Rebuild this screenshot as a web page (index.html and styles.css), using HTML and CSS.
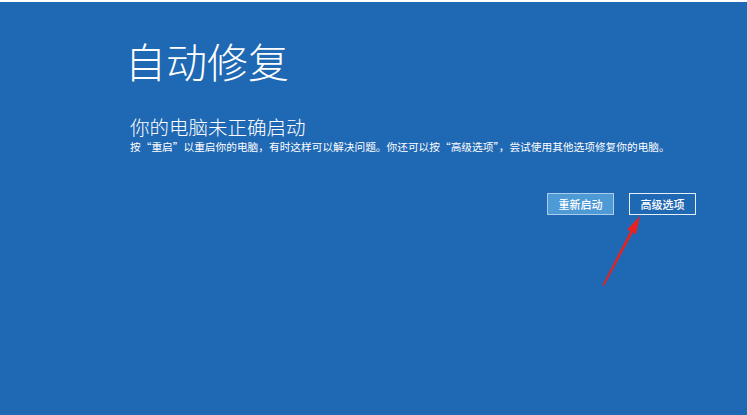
FILE: index.html
```html
<!DOCTYPE html>
<html lang="zh-CN">
<head>
  <meta charset="UTF-8" />
  <meta name="viewport" content="width=device-width, initial-scale=1.0"/>
  <title>自动修复</title>
  <link rel="stylesheet" href="styles.css">
</head>
<body>

  <div class="screen">
    <div class="title">自动修复</div>

    <div class="subtitle">你的电脑未正确启动</div>
    <div class="desc">按“重启”以重启你的电脑，有时这样可以解决问题。你还可以按“高级选项”，尝试使用其他选项修复你的电脑。</div>

    <div class="actions">
      <button class="btn primary">重新启动</button>
      <button class="btn">高级选项</button>
    </div>

    <svg class="arrow" width="60" height="80" viewBox="0 0 60 80">
      <polygon points="48,2 44,20.2 40.9,18.6 12,72 10.5,71 38.3,17.2 35.2,15.6" fill="#e8231f"/>
    </svg>
  </div>

</body>
</html>
```

FILE: styles.css
```css
body {
  margin: 0;
  background-color: #1f68b3;
  border-top: 2px solid #fff;
  color: white;
  font-family: "Noto Sans CJK SC", "Noto Sans", sans-serif;
}

.screen {
  position: relative;
  height: 413px;
  padding: 33px 0 0 125px;
  box-sizing: border-box;
}

.title {
  font-size: 41px;
  font-weight: 300;
  line-height: 50px;
}

.subtitle {
  margin-top: 30px;
  padding-left: 5px;
  font-size: 19.5px;
  font-weight: 300;
  line-height: 24px;
}

.desc {
  padding-left: 5px;
  font-size: 10.7px;
  line-height: 16px;
}

.actions {
  display: flex;
  justify-content: flex-end;
  gap: 15px;
  margin-top: 38px;
  padding-right: 51px;
}

.btn {
  width: 67px;
  height: 22px;
  padding: 0;
  background: transparent;
  border: 1.5px solid #e6eef7;
  color: white;
  font-family: "Noto Sans CJK SC", sans-serif;
  font-size: 11px;
  font-weight: 500;
}

.btn.primary {
  background-color: #4d9ad5;
  border-color: #a9cdeb;
}

.arrow {
  position: absolute;
  left: 592px;
  top: 212px;
}
```
